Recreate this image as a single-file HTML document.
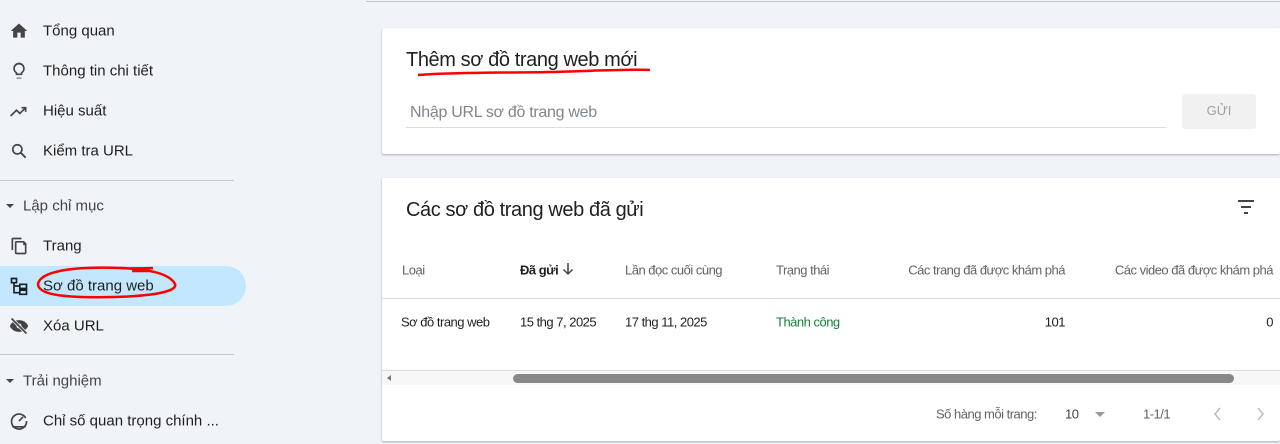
<!DOCTYPE html>
<html><head><meta charset="utf-8"><style>
*{margin:0;padding:0;box-sizing:border-box}
body{width:1280px;height:444px;overflow:hidden;background:#f0f4f9;font-family:"Liberation Sans","Noto Sans CJK SC",sans-serif;position:relative;color:#1f1f1f}
.a{position:absolute;white-space:nowrap}
.nav{font-size:15px;color:#1f1f1f;left:43px;transform:translateY(-50%)}
.ic{position:absolute;left:9px;width:20px;height:20px;transform:translateY(-50%)}
.sec{font-size:15px;color:#444;left:23px;transform:translateY(-50%)}
.tri{position:absolute;left:6px;width:0;height:0;border-left:4px solid transparent;border-right:4px solid transparent;border-top:4px solid #444}
.hr{position:absolute;left:0;width:234px;height:1px;background:#c7c7c7}
.card{position:absolute;left:382px;width:898px;background:#fff;border-radius:2px;box-shadow:0 1px 2px rgba(0,0,0,.3)}
.c{font-size:13px;letter-spacing:-.5px;transform:translateY(-50%)}
.h{color:#5f6368}
</style></head><body>
<div class="a" style="left:366px;top:1px;width:914px;height:1px;background:#c7c7c7"></div>
<div class="a" style="left:0;top:266px;width:246px;height:40px;background:#c2e7ff;border-radius:0 20px 20px 0"></div>

<svg class="ic" style="top:31px" viewBox="0 0 24 24"><path d="M10 20v-6h4v6h5v-8h3L12 3 2 12h3v8z" fill="#444"/></svg>
<div class="a nav" style="top:31px">Tổng quan</div>
<svg class="ic" style="top:71px" viewBox="0 0 24 24"><path d="M9 21h6v-1H9zM12 2a7 7 0 0 0-4 12.7V17h8v-2.3A7 7 0 0 0 12 2zm2.5 11.5-.5.4V15h-4v-1.1l-.5-.4a5 5 0 1 1 5 0z" fill="#444"/></svg>
<div class="a nav" style="top:71px">Thông tin chi tiết</div>
<svg class="ic" style="top:111px" viewBox="0 0 24 24"><path d="M2 18l7-7 4 4 7-7M15 8h5v5" stroke="#444" stroke-width="2" fill="none"/></svg>
<div class="a nav" style="top:111px">Hiệu suất</div>
<svg class="ic" style="top:151px" viewBox="0 0 24 24"><circle cx="10" cy="10" r="5.5" stroke="#444" stroke-width="2" fill="none"/><path d="M14 14l6 6" stroke="#444" stroke-width="2.2"/></svg>
<div class="a nav" style="top:151px">Kiểm tra URL</div>
<div class="hr" style="top:180px"></div>
<div class="tri" style="top:204px"></div>
<div class="a sec" style="top:206px">Lập chỉ mục</div>
<svg class="ic" style="top:246px" viewBox="0 0 24 24"><path d="M15 2H5a2 2 0 0 0-2 2v13h2V4h10zM18 6H9a2 2 0 0 0-2 2v12a2 2 0 0 0 2 2h10a2 2 0 0 0 2-2V9zm1 14H9V8h8v3h2z" fill="#444"/></svg>
<div class="a nav" style="top:246px">Trang</div>
<svg class="ic" style="top:286px" viewBox="0 0 24 24"><path d="M3 3h6v5H3zM13 10h8v5h-8zM13 17h8v5h-8zM6 8v12h7M6 12h7" stroke="#1f1f1f" stroke-width="2" fill="none"/></svg>
<div class="a nav" style="top:286px">Sơ đồ trang web</div>
<svg class="ic" style="top:326px" viewBox="0 0 24 24"><path d="M1 12c2-4.5 6-7 11-7s9 2.5 11 7c-2 4.5-6 7-11 7S3 16.5 1 12z" fill="#444"/><circle cx="12" cy="12" r="3" fill="#f0f4f9"/><path d="M3 3l18 18" stroke="#f0f4f9" stroke-width="4"/><path d="M3 3l18 18" stroke="#444" stroke-width="2"/></svg>
<div class="a nav" style="top:326px">Xóa URL</div>
<div class="hr" style="top:354px"></div>
<div class="tri" style="top:379px"></div>
<div class="a sec" style="top:381px">Trải nghiệm</div>
<svg class="ic" style="top:421px" viewBox="0 0 24 24"><path d="M20 8.5A9 9 0 1 0 21 12M12 12l5-5" stroke="#444" stroke-width="2" fill="none"/><path d="M4 19h16" stroke="#444" stroke-width="2"/></svg>
<div class="a nav" style="top:421px">Chỉ số quan trọng chính ...</div>

<svg class="a" style="left:30px;top:262px" width="150" height="40"><path d="M8 22C10 10 40 4 90 6c30 1 50 6 55 16 3 8-25 12-60 13C40 36 8 34 8 22z M90 6c15 1 30 0 33 0 M102 9h18" stroke="#f00" stroke-width="2.5" fill="none"/></svg>

<div class="card" style="top:28px;height:126px"></div>
<div class="a" style="left:406px;top:49px;font-size:20px;letter-spacing:-.4px;color:#1f1f1f">Thêm sơ đồ trang web mới</div>
<svg class="a" style="left:400px;top:66px" width="260" height="14"><path d="M18 9C60 6 100 7 150 6c40-1 80-3 100-2" stroke="#f00" stroke-width="2.5" fill="none"/></svg>
<div class="a" style="left:410px;top:104px;font-size:16px;letter-spacing:-.3px;color:#80868b">Nhập URL sơ đồ trang web</div>
<div class="a" style="left:406px;top:127px;width:760px;height:1px;background:#dadce0"></div>
<div class="a" style="left:1182px;top:94px;width:74px;height:35px;background:#f1f1f1;border-radius:3px;font-size:13px;color:#9aa0a6;text-align:center;line-height:33px">GỬI</div>

<div class="card" style="top:178px;height:263px"></div>
<div class="a" style="left:406px;top:199px;font-size:20px;letter-spacing:-.4px">Các sơ đồ trang web đã gửi</div>
<svg class="a" style="left:1236px;top:198px" width="20" height="18"><path d="M2 3h16M5 9h10M8 15h4" stroke="#444" stroke-width="2"/></svg>
<div class="a c h" style="left:402px;top:270px">Loại</div>
<div class="a c" style="left:520px;top:270px;font-weight:bold;color:#1f1f1f">Đã gửi</div>
<svg class="a" style="left:562px;top:262px" width="12" height="14"><path d="M6 1v11M1.5 7.5 6 12l4.5-4.5" stroke="#444" stroke-width="1.5" fill="none"/></svg>
<div class="a c h" style="left:625px;top:270px">Lần đọc cuối cùng</div>
<div class="a c h" style="left:776px;top:270px">Trạng thái</div>
<div class="a c h" style="right:215px;top:270px">Các trang đã được khám phá</div>
<div class="a c h" style="right:7px;top:270px">Các video đã được khám phá</div>
<div class="a" style="left:382px;top:298px;width:898px;height:1px;background:#dadce0"></div>
<div class="a c" style="left:401px;top:322px">Sơ đồ trang web</div>
<div class="a c" style="left:520px;top:322px">15 thg 7, 2025</div>
<div class="a c" style="left:625px;top:322px">17 thg 11, 2025</div>
<div class="a c" style="left:776px;top:322px;color:#188038">Thành công</div>
<div class="a c" style="right:215px;top:322px">101</div>
<div class="a c" style="right:7px;top:322px">0</div>
<div class="a" style="left:382px;top:370px;width:898px;height:1px;background:#dadce0"></div>
<div class="a" style="left:382px;top:371px;width:898px;height:14px;background:#f7f7f7"></div>
<div class="a" style="left:387px;top:375px;width:0;height:0;border-top:3px solid transparent;border-bottom:3px solid transparent;border-right:4px solid #777"></div>
<div class="a" style="left:513px;top:374px;width:721px;height:9px;background:#888;border-radius:5px"></div>
<div class="a c h" style="left:936px;top:414px">Số hàng mỗi trang:</div>
<div class="a c" style="left:1065px;top:414px;color:#444">10</div>
<div class="a" style="left:1095px;top:412px;width:0;height:0;border-left:5px solid transparent;border-right:5px solid transparent;border-top:5px solid #999"></div>
<div class="a c h" style="left:1143px;top:414px">1-1/1</div>
<svg class="a" style="left:1212px;top:406px" width="12" height="16"><path d="M8 2 3 8l5 6" stroke="#bbb" stroke-width="1.5" fill="none"/></svg>
<svg class="a" style="left:1255px;top:406px" width="12" height="16"><path d="M3 2l5 6-5 6" stroke="#bbb" stroke-width="1.5" fill="none"/></svg>
</body></html>
